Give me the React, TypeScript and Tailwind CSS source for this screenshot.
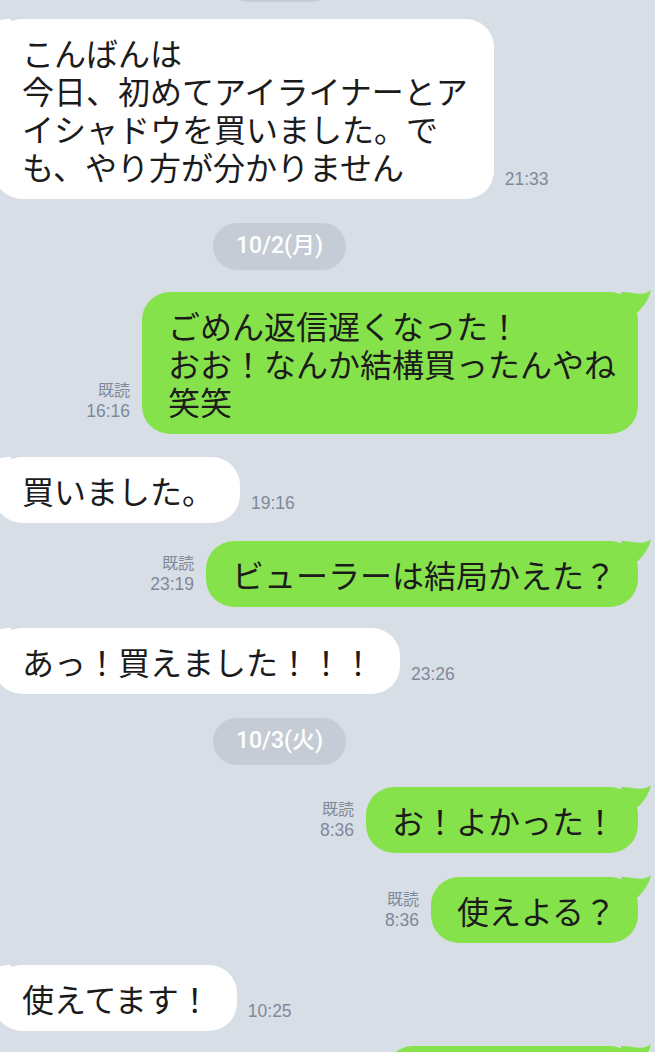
import React from "react";

const jp = "font-['Noto_Sans_CJK_JP','Noto_Sans_CJK_SC',sans-serif]";
const meta = "font-['Liberation_Sans','Noto_Sans_CJK_JP',sans-serif]";

const TailRight = () => (
  <svg className="absolute -right-[15px] -top-[2px]" width="32" height="28" viewBox="0 0 32 28">
    <path d="M0 2 C12 2 22 7 30 0 C28 9 23 16 17 22 L0 22 Z" fill="#86e24b" />
  </svg>
);

const TailLeft = () => (
  <svg className="absolute -left-[15px] -top-[2px]" width="32" height="28" viewBox="0 0 32 28">
    <path d="M32 2 C20 2 10 7 2 0 C4 9 9 16 15 22 L32 22 Z" fill="#ffffff" />
  </svg>
);

const Incoming = ({ lines, time, mt }: { lines: string[]; time: string; mt: string }) => {
  return (
    <div className={`flex items-end ${mt}`}>
      <div className={`relative -ml-[6px] bg-white rounded-[28px] pl-[28px] pr-[26px] py-[14px] text-[32px] leading-[38px] text-[#1b1b1b] whitespace-nowrap ${jp}`}>
        <TailLeft />
        {lines.map((l, i) => (
          <div key={i}>{l}</div>
        ))}
      </div>
      <div className={`ml-[11px] mb-[11px] text-[17.5px] leading-[18px] text-[#7f899a] ${meta}`}>{time}</div>
    </div>
  );
};

const Outgoing = ({ lines, time, mt, w }: { lines: string[]; time?: string; mt: string; w?: string }) => {
  return (
    <div className={`flex items-end justify-end pr-[17px] ${mt}`}>
      {time && (
        <div className={`mr-[12px] mb-[12px] flex flex-col items-end text-[#7f899a] ${meta}`}>
          <span className="text-[16px] leading-[21px]">既読</span>
          <span className="text-[17.5px] leading-[21px]">{time}</span>
        </div>
      )}
      <div className={`relative bg-[#86e24b] rounded-[28px] pl-[26px] pr-[22px] py-[14px] text-[32px] leading-[38px] text-[#1b1b1b] whitespace-nowrap ${jp} ${w ?? ""}`}>
        <TailRight />
        {lines.map((l, i) => (
          <div key={i}>{l}</div>
        ))}
      </div>
    </div>
  );
};

const DatePill = ({ label, mt }: { label: string; mt: string }) => (
  <div className={`flex ${mt}`}>
    <div className="ml-[213px] w-[133px] h-[47px] rounded-full bg-[#c5ccd6] flex items-center justify-center text-white text-[23px] font-medium font-['Roboto','Noto_Sans_CJK_JP',sans-serif]">
      {label}
    </div>
  </div>
);

export default function App() {
  return (
    <div className="w-[655px] h-[1052px] overflow-hidden bg-[#d7dee6] flex flex-col">
      <div className="flex -mt-[45px]">
        <div className="ml-[225px] w-[110px] h-[47px] rounded-full bg-[#c5ccd6]" />
      </div>
      <Incoming
        mt="mt-[17px]"
        lines={["こんばんは", "今日、初めてアイライナーとア", "イシャドウを買いました。で", "も、やり方が分かりません"]}
        time="21:33"
      />
      <DatePill label="10/2(月)" mt="mt-[24px]" />
      <Outgoing
        mt="mt-[22px]"
        lines={["ごめん返信遅くなった！", "おお！なんか結構買ったんやね", "笑笑"]}
        time="16:16"
      />
      <Incoming mt="mt-[23px]" lines={["買いました。"]} time="19:16" />
      <Outgoing mt="mt-[18px]" lines={["ビューラーは結局かえた？"]} time="23:19" />
      <Incoming mt="mt-[21px]" lines={["あっ！買えました！！！"]} time="23:26" />
      <DatePill label="10/3(火)" mt="mt-[24px]" />
      <Outgoing mt="mt-[22px]" lines={["お！よかった！"]} time="8:36" />
      <Outgoing mt="mt-[24px]" lines={["使えよる？"]} time="8:36" />
      <Incoming mt="mt-[22px]" lines={["使えてます！"]} time="10:25" />
      <Outgoing mt="mt-[15px]" lines={[""]} w="w-[253px] h-[66px]" />
    </div>
  );
}
